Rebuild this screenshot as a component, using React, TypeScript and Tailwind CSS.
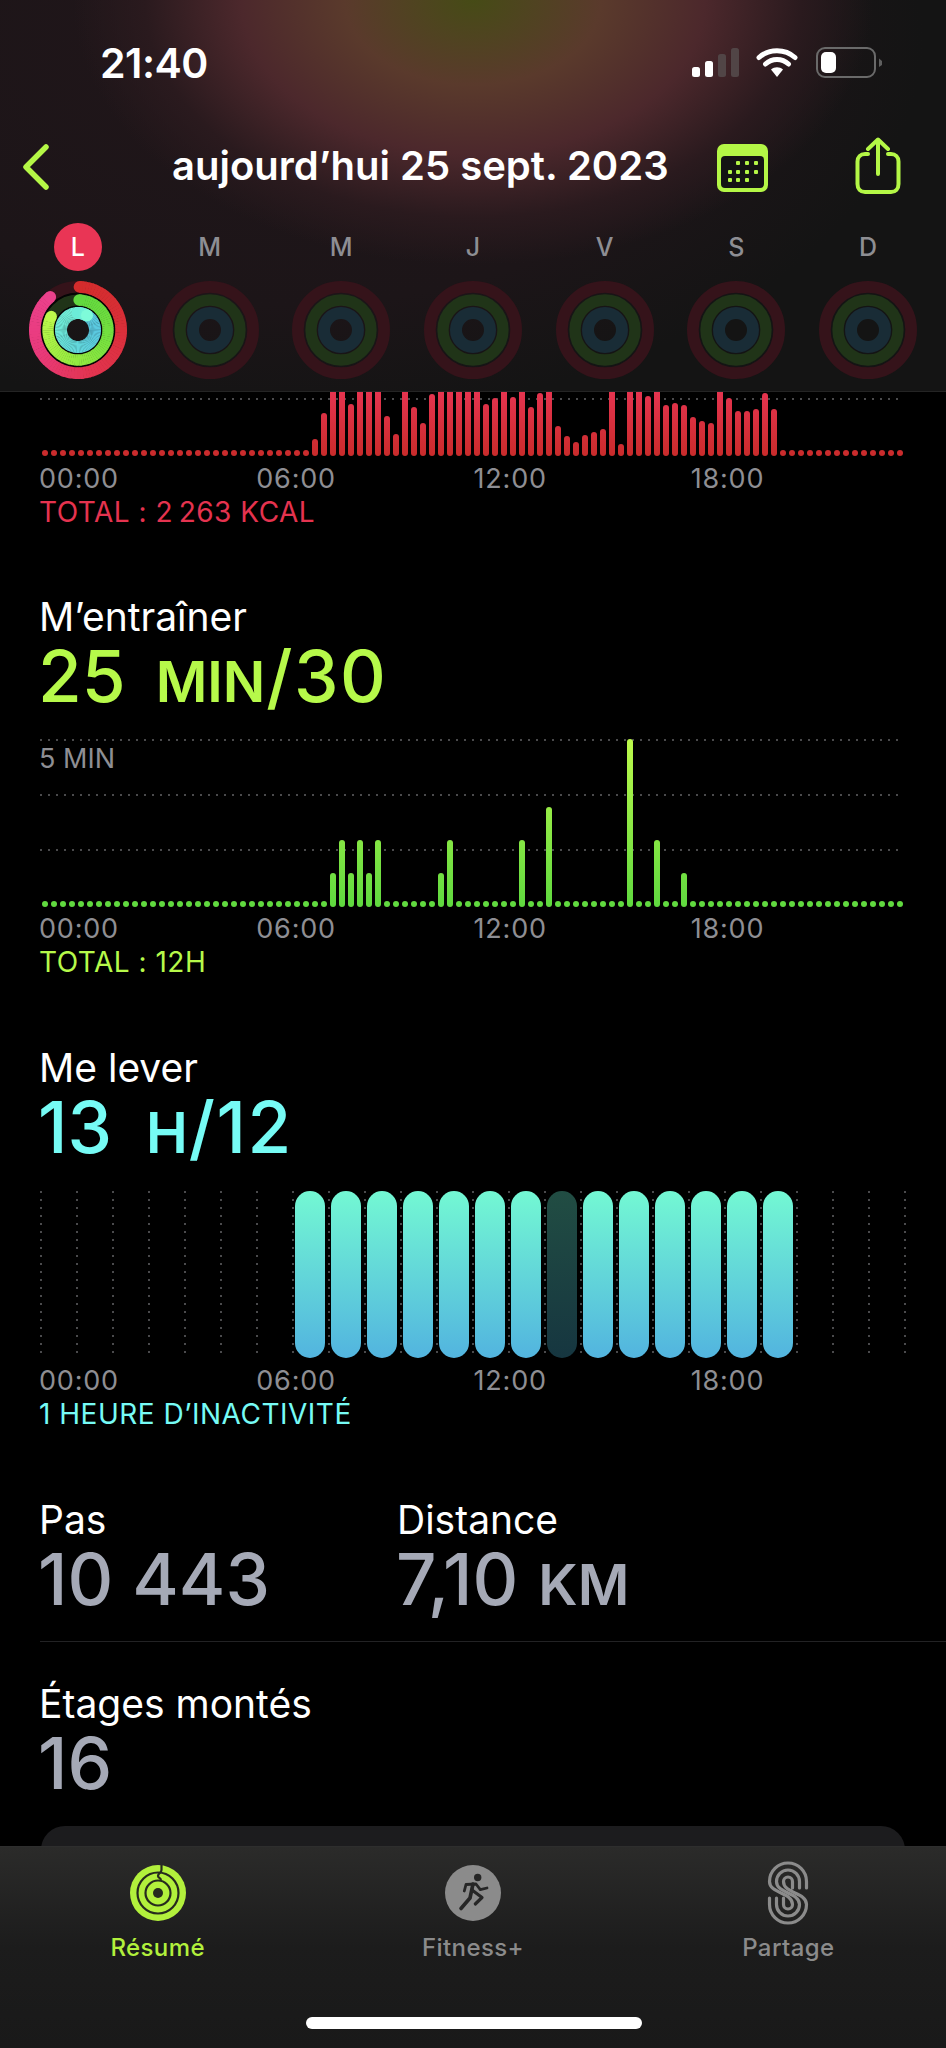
import React from "react";

const RED: number[] = [
  ...Array(30).fill(6), 17, 43, 80, 80, 52, 80, 80, 80, 40, 22, 80, 49, 33, 62, 80, 80, 80, 80, 80, 52, 58, 80, 59, 80, 49, 63, 80, 30, 20, 14, 21, 24, 27, 80, 12, 80, 80, 60, 80, 51, 53, 51, 39, 35, 33, 80, 58, 45, 45, 47, 63, 47,
  ...Array(14).fill(6),
];

const GREEN_MAP: Record<number, number> = { 32: 34, 33: 67, 34: 34, 35: 67, 36: 34, 37: 67, 44: 34, 45: 67, 53: 67, 56: 100, 65: 168, 68: 67, 71: 34 };
const GREEN: number[] = Array.from({ length: 96 }, (_, i) => GREEN_MAP[i] ?? 6);

const HOURS = ["00:00", "06:00", "12:00", "18:00"];
const DAYS = ["L", "M", "M", "J", "V", "S", "D"];

function hex(c: string) {
  return [1, 3, 5].map((i) => parseInt(c.slice(i, i + 2), 16));
}
function mix(stops: string[], t: number) {
  const p = Math.min(0.9999, Math.max(0, t)) * (stops.length - 1);
  const i = Math.floor(p);
  const a = hex(stops[i]);
  const b = hex(stops[i + 1]);
  const f = p - i;
  return `rgb(${a.map((v, k) => Math.round(v + (b[k] - v) * f)).join(",")})`;
}
function pt(r: number, deg: number) {
  const a = ((deg - 90) * Math.PI) / 180;
  return [49 + r * Math.cos(a), 49 + r * Math.sin(a)];
}

function Arc({ r, w, start, end, stops }: { r: number; w: number; start: number; end: number; stops: string[] }) {
  const n = Math.ceil((end - start) / 4);
  const segs = [];
  for (let i = 0; i < n; i++) {
    const a0 = start + ((end - start) * i) / n;
    const a1 = start + ((end - start) * (i + 1)) / n + 0.6;
    const [x0, y0] = pt(r, a0);
    const [x1, y1] = pt(r, a1);
    segs.push(<path key={i} d={`M${x0} ${y0}A${r} ${r} 0 0 1 ${x1} ${y1}`} stroke={mix(stops, i / n)} strokeWidth={w} fill="none" />);
  }
  const s = pt(r, start);
  const e = pt(r, end);
  return (
    <g>
      <circle cx={s[0]} cy={s[1]} r={w / 2} fill={mix(stops, 0)} />
      {segs}
      <circle cx={e[0]} cy={e[1]} r={w / 2} fill={mix(stops, 1)} />
    </g>
  );
}

function Rings({ today }: { today?: boolean }) {
  return (
    <svg width="98" height="98" viewBox="0 0 98 98">
      <circle cx="49" cy="49" r="43.150" fill="none" stroke="#35131a" strokeWidth="11.700" />
      <circle cx="49" cy="49" r="30" fill="none" stroke="#203418" strokeWidth="11.300" />
      <circle cx="49" cy="49" r="17" fill="none" stroke="#192c36" strokeWidth="12" />
      {today && (
        <>
          <circle cx="49" cy="49" r="36.500" fill="none" stroke="#050505" strokeWidth="2" />
          <circle cx="49" cy="49" r="23.700" fill="none" stroke="#050505" strokeWidth="1.600" />
          <Arc r={43.15} w={11.7} start={2} end={320} stops={["#d32c2c", "#d92f38", "#e23450", "#e93a7c", "#eb418c"]} />
          <Arc r={30} w={11.3} start={2} end={297} stops={["#62d83f", "#74e03f", "#9aec41", "#bcf94b"]} />
          <Arc r={17} w={12} start={0} end={360} stops={["#5fd0e0", "#5ac8e0", "#62d8dc", "#6ee8d8", "#74f2d8"]} />
          <Arc r={17} w={12} start={0} end={32} stops={["#6cecd8", "#7efbd9"]} />
        </>
      )}
    </svg>
  );
}

function DotLine({ className = "" }: { className?: string }) {
  return <div className={`absolute left-0 right-0 h-[2px] bg-[linear-gradient(to_right,#4a4a4c_2px,transparent_2px)] bg-[length:8px_2px] ${className}`} />;
}

function Bars({ data, gradient, height }: { data: number[]; gradient: string; height: string }) {
  return (
    <div className={`relative flex w-[864px] items-end overflow-hidden ${height}`}>
      {data.map((h, i) => (
        <div key={i} className="flex w-[9px] shrink-0 justify-center">
          <div className={`w-[6px] rounded-t-[3px] rounded-b-[3px] ${gradient}`} style={{ height: h }} />
        </div>
      ))}
    </div>
  );
}

function Times() {
  return (
    <div className="-ml-[1px] grid w-[869px] grid-cols-4 text-[27px] leading-[30px] tracking-[0.8px] text-[#8e8e93]">
      {HOURS.map((h) => (
        <span key={h}>{h}</span>
      ))}
    </div>
  );
}

function Caption({ color, children }: { color: string; children: React.ReactNode }) {
  return <div className={`-ml-[1px] mt-[3px] text-[28px] leading-[30px] tracking-[0.5px] ${color}`}>{children}</div>;
}

function Title({ children }: { children: React.ReactNode }) {
  return <div className="-ml-[1px] h-[42px] whitespace-nowrap text-[39px] leading-[42px] text-white">{children}</div>;
}

function BigValue({ num, unit, rest, color, gap = "ml-[30px]" }: { num: string; unit?: string; rest?: string; color: string; gap?: string }) {
  return (
    <div className={`-ml-[2px] flex h-[78px] items-baseline whitespace-nowrap text-[71px] font-medium leading-[76px] ${color}`}>
      <span>{num}</span>
      {unit && <span className={`${gap} text-[56px] font-semibold`}>{unit}</span>}
      {rest && <span className="ml-[1px] tracking-[1.5px]">{rest}</span>}
    </div>
  );
}

function StatusBar() {
  return (
    <div className="flex h-[34px] items-center justify-between pl-[100px] pr-[64px]">
      <span className="text-[41px] font-semibold leading-[34px] tracking-[-0.5px] text-white">21:40</span>
      <svg className="mt-[2px]" width="190" height="34" viewBox="0 0 190 34">
        <rect x="0" y="20" width="8" height="10" rx="2.5" fill="#fff" />
        <rect x="13" y="14" width="8" height="16" rx="2.5" fill="#fff" />
        <rect x="26" y="7" width="8" height="23" rx="2.5" fill="#514546" />
        <rect x="39" y="1" width="8" height="29" rx="2.5" fill="#514546" />
        <path d="M67 10.5C77 1.5 93 1.5 103 10.5" fill="none" stroke="#fff" strokeWidth="5" strokeLinecap="round" />
        <path d="M73.5 17C80 11 90 11 96.5 17" fill="none" stroke="#fff" strokeWidth="5" strokeLinecap="round" />
        <path d="M79 22.5C82.5 19.5 87.5 19.5 91 22.5L85 30Z" fill="#fff" />
        <rect x="125" y="1" width="58" height="29" rx="8" fill="none" stroke="#6a6a6a" strokeWidth="2" />
        <rect x="129" y="5" width="15" height="21" rx="5" fill="#fff" />
        <path d="M187 11.5L190 14V18L187 20Z" fill="#5f5f5f" />
      </svg>
    </div>
  );
}

function NavBar() {
  return (
    <div className="mt-[57px] flex h-[58px] items-center pl-[22px]">
      <svg className="mt-[2px]" width="28" height="48" viewBox="0 0 28 48">
        <path d="M24 4L4 24L24 44" fill="none" stroke="#b4f746" strokeWidth="5.5" strokeLinecap="round" strokeLinejoin="round" />
      </svg>
      <span className="ml-[122px] w-[496px] whitespace-nowrap text-[40px] font-semibold leading-[58px] text-white">aujourd’hui 25 sept. 2023</span>
      <svg className="ml-[49px] mt-[3px]" width="51" height="48" viewBox="0 0 51 48">
        <rect width="51" height="48" rx="7" fill="#b4f746" />
        <rect x="4" y="12" width="43" height="32" rx="4" fill="#141414" />
        {[[21, 19], [30, 19], [39, 19], [13, 28], [21, 28], [30, 28], [39, 28], [13, 36], [21, 36], [30, 36]].map(([x, y], i) => (
          <rect key={i} x={x - 2} y={y - 2} width="4" height="4" rx="1" fill="#b4f746" />
        ))}
      </svg>
      <svg className="ml-[87px]" width="46" height="58" viewBox="0 0 46 58">
        <path d="M13 17H10C5.5 17 2.5 20 2.5 24.5V47C2.5 52 5.5 55 10 55H36C40.500 55 43.500 52 43.500 47V24.500C43.500 20 40.500 17 36 17H33" fill="none" stroke="#b4f746" strokeWidth="4" strokeLinecap="round" />
        <path d="M23 37V4M13 12L23 2.500L33 12" fill="none" stroke="#b4f746" strokeWidth="4" strokeLinecap="round" strokeLinejoin="round" />
      </svg>
    </div>
  );
}

function Header() {
  return (
    <header className="relative h-[392px] shrink-0 border-b border-[#242424] bg-[#141414] bg-[radial-gradient(ellipse_400px_265px_at_50%_0%,#464b16_0%,#4f4420_14%,#5a3a2c_32%,#4c282c_58%,#2a1a1e_82%,transparent_100%),radial-gradient(ellipse_640px_380px_at_30%_10%,#21161a_0%,#1c1518_70%,transparent_100%)]">
      <div className="pt-[46px]">
        <StatusBar />
        <NavBar />
        <div className="mt-[28px] grid grid-cols-7 px-[12px]">
          {DAYS.map((d, i) => (
            <div key={i} className="flex flex-col items-center">
              <div className={`flex h-[48px] w-[48px] items-center justify-center rounded-full pt-[1px] text-[25px] font-medium ${i === 0 ? "bg-[#e93555] text-white" : "text-[#8e8e93]"}`}>{d}</div>
              <div className="mt-[10px] h-[98px]">
                <Rings today={i === 0} />
              </div>
            </div>
          ))}
        </div>
      </div>
    </header>
  );
}

function ResumeIcon() {
  return (
    <svg width="56" height="56" viewBox="0 0 56 56">
      <circle cx="28" cy="28" r="28" fill="#b2f03c" />
      <circle cx="28" cy="28" r="20.5" fill="none" stroke="#262a1e" strokeWidth="2.2" />
      <circle cx="28" cy="28" r="12.500" fill="none" stroke="#262a1e" strokeWidth="2.2" />
      <circle cx="28" cy="28" r="5" fill="#262a1e" />
      <path d="M31.500 0V5C31.500 8 28 8 28 11C28 13 31 13 31 15.500" fill="none" stroke="#262a1e" strokeWidth="2.2" />
    </svg>
  );
}

function FitnessIcon() {
  return (
    <svg width="56" height="56" viewBox="-28 -28 56 56">
      <circle r="28" fill="#8b8b8b" />
      <circle cx="4.700" cy="-15.500" r="3.700" fill="#262626" />
      <path d="M-8.700 -2L-7 -8.500L3 -9L7.300 -3.300L14 -5" fill="none" stroke="#262626" strokeWidth="2.800" strokeLinecap="round" strokeLinejoin="round" />
      <path d="M0 -9L-3 5L-12 15.500" fill="none" stroke="#262626" strokeWidth="3.600" strokeLinecap="round" strokeLinejoin="round" />
      <path d="M-1 -3L9 4.500L2.300 11" fill="none" stroke="#262626" strokeWidth="3.200" strokeLinecap="round" strokeLinejoin="round" />
    </svg>
  );
}

function ShareIcon() {
  const loops: [number, number][] = [[18.5, 4.5], [11.5, 11.5], [4.5, 18.5]];
  return (
    <svg width="42" height="64" viewBox="-21 -32 42 64">
      {loops.map(([a, b], i) => (
        <path
          key={i}
          d={`M${a} -5V-11.500A${a} ${a} 0 0 0 ${-a} -11.500C${-a} 1 ${b} -1 ${b} 11.500A${b} ${b} 0 0 1 ${-b} 11.500V5`}
          fill="none"
          stroke="#8b8b8b"
          strokeWidth="3.200"
          strokeLinecap="round"
        />
      ))}
    </svg>
  );
}

function TabBar() {
  return (
    <footer className="relative h-[202px] shrink-0 border-t border-[#2e2e2e] bg-[#191919] bg-[linear-gradient(to_bottom,#2b2b2a_0%,#1c1c1c_50%,#191919_100%)]">
      <div className="grid h-[102px] grid-cols-3 pt-[14px]">
        {[
          { label: "Résumé", icon: <ResumeIcon />, color: "text-[#b2f03c]" },
          { label: "Fitness+", icon: <FitnessIcon />, color: "text-[#8b8b8b]" },
          { label: "Partage", icon: <ShareIcon />, color: "text-[#8b8b8b]" },
        ].map((t) => (
          <div key={t.label} className="flex flex-col items-center">
            <div className="flex h-[64px] items-center justify-center">{t.icon}</div>
            <span className={`mt-[8px] text-[24px] font-medium leading-[30px] tracking-[0.4px] ${t.color}`}>{t.label}</span>
          </div>
        ))}
      </div>
      <div className="absolute bottom-[19px] left-[306px] h-[12px] w-[336px] rounded-full bg-white" />
    </footer>
  );
}

export default function App() {
  return (
    <div className="flex h-[2048px] w-[946px] flex-col overflow-hidden bg-black text-white [font-family:Inter,sans-serif]">
      <Header />
      <main className="min-h-0 flex-1 overflow-hidden">
        <div className="pl-[40px]">
          <div className="relative w-[864px]">
            <DotLine className="top-[6px]" />
            <Bars data={RED} height="h-[64px]" gradient="bg-[linear-gradient(to_top,#c92b2b,#e5344f)] bg-[length:100%_64px] bg-bottom" />
          </div>
          <div className="mt-[8px]">
            <Times />
          </div>
          <Caption color="text-[#e5334f]">TOTAL : 2{"\u202f"}263 KCAL</Caption>

          <div className="mt-[69px]">
            <Title>M’entraîner</Title>
            <BigValue num="25" unit="MIN" rest="/30" color="text-[#b6f94a]" />
          </div>
          <div className="relative mt-[23px] w-[864px]">
            <DotLine className="top-0" />
            <DotLine className="top-[55px]" />
            <DotLine className="top-[110px]" />
            <span className="absolute -left-[1px] top-[5px] text-[27px] leading-[30px] text-[#8e8e93]">5 MIN</span>
            <Bars data={GREEN} height="h-[168px]" gradient="bg-[linear-gradient(to_top,#5fd93f,#bdf94b)] bg-[length:100%_168px] bg-bottom" />
          </div>
          <div className="mt-[7px]">
            <Times />
          </div>
          <Caption color="text-[#b6f94a]">TOTAL : 12H</Caption>

          <div className="mt-[70px]">
            <Title>Me lever</Title>
            <BigValue num="13" unit="H" gap="ml-[34px]" rest="/12" color="text-[#76fbf5]" />
          </div>
          <div className="relative mt-[24px] h-[167px] w-[866px]">
            <div className="absolute inset-0 flex justify-between">
              {Array.from({ length: 25 }, (_, i) => (
                <div key={i} className="h-full w-[2px] bg-[linear-gradient(to_bottom,#4a4a4c_2px,transparent_2px)] bg-[length:2px_8px]" />
              ))}
            </div>
            <div className="relative grid h-full w-[864px] grid-cols-[repeat(24,36px)]">
              {Array.from({ length: 24 }, (_, i) => (
                <div key={i} className="px-[3px]">
                  {i >= 7 && i <= 20 && (
                    <div className={`h-full rounded-[15px] ${i === 14 ? "bg-[linear-gradient(to_bottom,#214d43,#163640)]" : "bg-[linear-gradient(to_bottom,#73f8d3,#52b4df)]"}`} />
                  )}
                </div>
              ))}
            </div>
          </div>
          <div className="mt-[8px]">
            <Times />
          </div>
          <Caption color="text-[#76fbf5]">1 HEURE D’INACTIVITÉ</Caption>

          <div className="mt-[70px] flex">
            <div className="w-[358px]">
              <Title>Pas</Title>
              <BigValue num="10 443" color="text-[#a5a9b6]" />
            </div>
            <div>
              <Title>Distance</Title>
              <BigValue num="7,10" unit="KM" gap="ml-[20px]" color="text-[#a5a9b6]" />
            </div>
          </div>
          <div className="mt-[22px] h-[1px] bg-[#222224]" />
          <div className="mt-[41px]">
            <Title>Étages montés</Title>
            <BigValue num="16" color="text-[#a5a9b6]" />
          </div>
        </div>
        <div className="mx-[41px] mt-[23px] h-[40px] rounded-t-[24px] bg-[#1c1c1e]" />
      </main>
      <TabBar />
    </div>
  );
}
